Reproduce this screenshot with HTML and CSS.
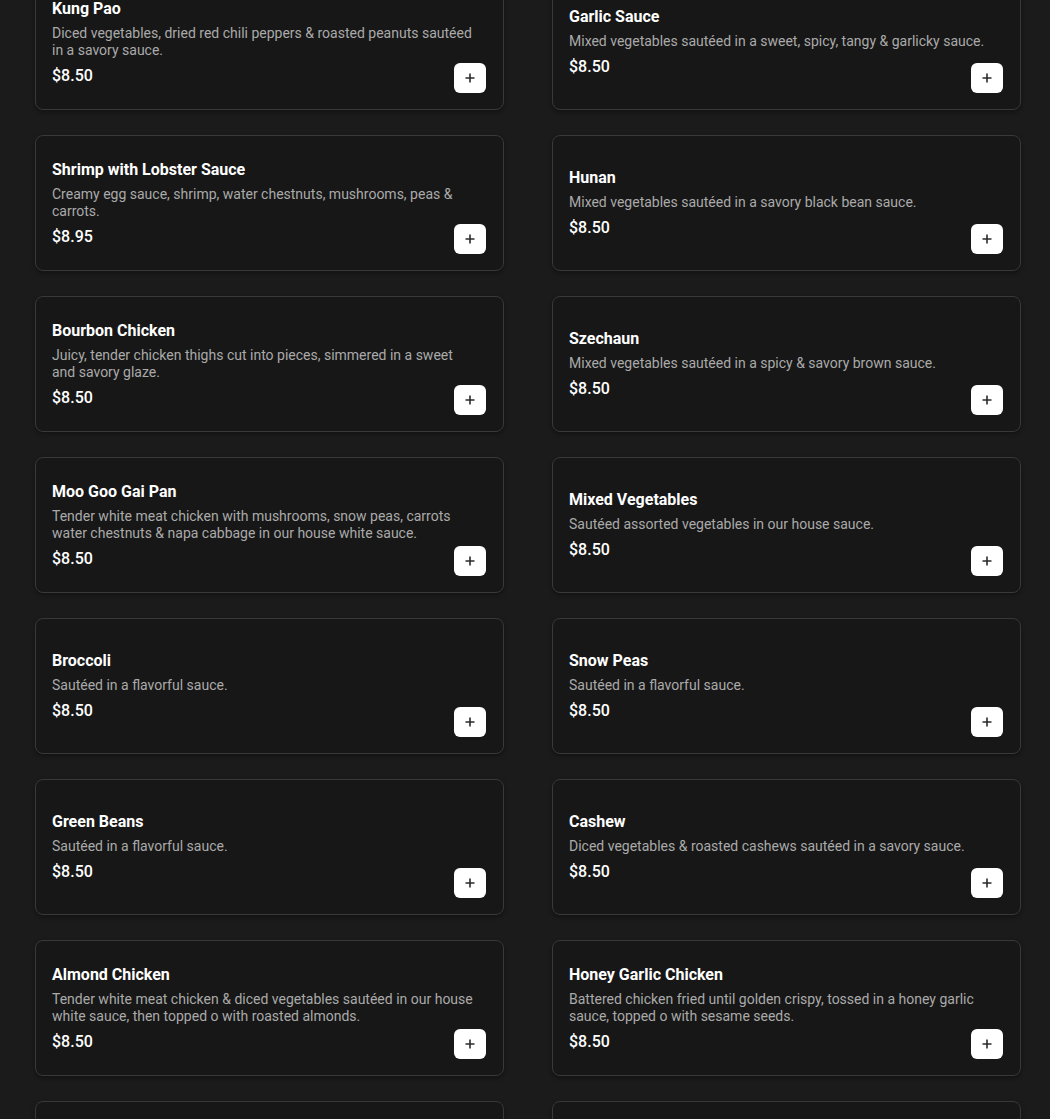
FILE: index.html
```html
<!DOCTYPE html>
<html lang="en">
<head>
    <meta charset="UTF-8">
    <meta name="viewport" content="width=device-width, initial-scale=1.0">
    <title>Menu</title>
    <link rel="stylesheet" href="styles.css">
</head>
<body>
    <div class="menu">
        <div class="menu-grid">
            <div class="menu-item">
                <div class="item-info">
                    <h3>Kung Pao</h3>
                    <p class="item-desc">Diced vegetables, dried red chili peppers &amp; roasted peanuts sautéed in a savory sauce.</p>
                    <div class="item-price">$8.50</div>
                </div>
                <button class="add-button" aria-label="Add"><svg viewBox="0 0 12 12"><path d="M6 1.5v9M1.5 6h9"/></svg></button>
            </div>
            <div class="menu-item">
                <div class="item-info">
                    <h3>Garlic Sauce</h3>
                    <p class="item-desc">Mixed vegetables sautéed in a sweet, spicy, tangy &amp; garlicky sauce.</p>
                    <div class="item-price">$8.50</div>
                </div>
                <button class="add-button" aria-label="Add"><svg viewBox="0 0 12 12"><path d="M6 1.5v9M1.5 6h9"/></svg></button>
            </div>

            <div class="menu-item">
                <div class="item-info">
                    <h3>Shrimp with Lobster Sauce</h3>
                    <p class="item-desc">Creamy egg sauce, shrimp, water chestnuts, mushrooms, peas &amp; carrots.</p>
                    <div class="item-price">$8.95</div>
                </div>
                <button class="add-button" aria-label="Add"><svg viewBox="0 0 12 12"><path d="M6 1.5v9M1.5 6h9"/></svg></button>
            </div>
            <div class="menu-item">
                <div class="item-info">
                    <h3>Hunan</h3>
                    <p class="item-desc">Mixed vegetables sautéed in a savory black bean sauce.</p>
                    <div class="item-price">$8.50</div>
                </div>
                <button class="add-button" aria-label="Add"><svg viewBox="0 0 12 12"><path d="M6 1.5v9M1.5 6h9"/></svg></button>
            </div>

            <div class="menu-item">
                <div class="item-info">
                    <h3>Bourbon Chicken</h3>
                    <p class="item-desc">Juicy, tender chicken thighs cut into pieces, simmered in a sweet and savory glaze.</p>
                    <div class="item-price">$8.50</div>
                </div>
                <button class="add-button" aria-label="Add"><svg viewBox="0 0 12 12"><path d="M6 1.5v9M1.5 6h9"/></svg></button>
            </div>
            <div class="menu-item">
                <div class="item-info">
                    <h3>Szechaun</h3>
                    <p class="item-desc">Mixed vegetables sautéed in a spicy &amp; savory brown sauce.</p>
                    <div class="item-price">$8.50</div>
                </div>
                <button class="add-button" aria-label="Add"><svg viewBox="0 0 12 12"><path d="M6 1.5v9M1.5 6h9"/></svg></button>
            </div>

            <div class="menu-item">
                <div class="item-info">
                    <h3>Moo Goo Gai Pan</h3>
                    <p class="item-desc">Tender white meat chicken with mushrooms, snow peas, carrots water chestnuts &amp; napa cabbage in our house white sauce.</p>
                    <div class="item-price">$8.50</div>
                </div>
                <button class="add-button" aria-label="Add"><svg viewBox="0 0 12 12"><path d="M6 1.5v9M1.5 6h9"/></svg></button>
            </div>
            <div class="menu-item">
                <div class="item-info">
                    <h3>Mixed Vegetables</h3>
                    <p class="item-desc">Sautéed assorted vegetables in our house sauce.</p>
                    <div class="item-price">$8.50</div>
                </div>
                <button class="add-button" aria-label="Add"><svg viewBox="0 0 12 12"><path d="M6 1.5v9M1.5 6h9"/></svg></button>
            </div>

            <div class="menu-item">
                <div class="item-info">
                    <h3>Broccoli</h3>
                    <p class="item-desc">Sautéed in a flavorful sauce.</p>
                    <div class="item-price">$8.50</div>
                </div>
                <button class="add-button" aria-label="Add"><svg viewBox="0 0 12 12"><path d="M6 1.5v9M1.5 6h9"/></svg></button>
            </div>
            <div class="menu-item">
                <div class="item-info">
                    <h3>Snow Peas</h3>
                    <p class="item-desc">Sautéed in a flavorful sauce.</p>
                    <div class="item-price">$8.50</div>
                </div>
                <button class="add-button" aria-label="Add"><svg viewBox="0 0 12 12"><path d="M6 1.5v9M1.5 6h9"/></svg></button>
            </div>

            <div class="menu-item">
                <div class="item-info">
                    <h3>Green Beans</h3>
                    <p class="item-desc">Sautéed in a flavorful sauce.</p>
                    <div class="item-price">$8.50</div>
                </div>
                <button class="add-button" aria-label="Add"><svg viewBox="0 0 12 12"><path d="M6 1.5v9M1.5 6h9"/></svg></button>
            </div>
            <div class="menu-item">
                <div class="item-info">
                    <h3>Cashew</h3>
                    <p class="item-desc">Diced vegetables &amp; roasted cashews sautéed in a savory sauce.</p>
                    <div class="item-price">$8.50</div>
                </div>
                <button class="add-button" aria-label="Add"><svg viewBox="0 0 12 12"><path d="M6 1.5v9M1.5 6h9"/></svg></button>
            </div>

            <div class="menu-item">
                <div class="item-info">
                    <h3>Almond Chicken</h3>
                    <p class="item-desc">Tender white meat chicken &amp; diced vegetables sautéed in our house white sauce, then topped o with roasted almonds.</p>
                    <div class="item-price">$8.50</div>
                </div>
                <button class="add-button" aria-label="Add"><svg viewBox="0 0 12 12"><path d="M6 1.5v9M1.5 6h9"/></svg></button>
            </div>
            <div class="menu-item">
                <div class="item-info">
                    <h3>Honey Garlic Chicken</h3>
                    <p class="item-desc">Battered chicken fried until golden crispy, tossed in a honey garlic sauce, topped o with sesame seeds.</p>
                    <div class="item-price">$8.50</div>
                </div>
                <button class="add-button" aria-label="Add"><svg viewBox="0 0 12 12"><path d="M6 1.5v9M1.5 6h9"/></svg></button>
            </div>

            <!-- next row, only its top edge is in view -->
            <div class="menu-item">
                <button class="add-button" aria-label="Add"><svg viewBox="0 0 12 12"><path d="M6 1.5v9M1.5 6h9"/></svg></button>
            </div>
            <div class="menu-item">
                <button class="add-button" aria-label="Add"><svg viewBox="0 0 12 12"><path d="M6 1.5v9M1.5 6h9"/></svg></button>
            </div>
        </div>
    </div>
</body>
</html>
```

FILE: styles.css
```css
:root {
    --page-bg: #1b1b1b;
    --card-bg: #171717;
    --card-border: #393939;
    --text-main: #ffffff;
    --text-muted: #aaaaaa;
    --icon-dark: #2b2b2b;
}

* {
    margin: 0;
    padding: 0;
    box-sizing: border-box;
}

body {
    font-family: Roboto, 'Liberation Sans', sans-serif;
    color: var(--text-main);
    background-color: var(--page-bg);
    min-height: 100vh;
    overflow: hidden;
}

/* page is shown scrolled a little, so the first row is cut off */
.menu {
    padding: 0 29px 0 35px;
    margin-top: -26px;
}

.menu-grid {
    display: grid;
    grid-template-columns: 469px 469px;
    column-gap: 48px;
    row-gap: 25px;
}

.menu-item {
    display: grid;
    grid-template-areas: "stack";
    height: 136px;
    padding: 16px;
    background-color: var(--card-bg);
    border: 1px solid var(--card-border);
    border-radius: 8px;
    box-shadow: 0 2px 4px rgba(0, 0, 0, 0.35);
}

.item-info {
    grid-area: stack;
    align-self: center;
    padding-right: 8px;
}

.item-info h3 {
    font-size: 16px;
    font-weight: 700;
    line-height: 24px;
    margin-bottom: 4px;
}

.item-desc {
    font-size: 14px;
    line-height: 17px;
    color: var(--text-muted);
}

.item-price {
    font-size: 16px;
    font-weight: 500;
    line-height: 24px;
    margin-top: 5px;
}

.add-button {
    grid-area: stack;
    align-self: end;
    justify-self: end;
    display: flex;
    align-items: center;
    justify-content: center;
    width: 32px;
    height: 30px;
    margin-right: 1px;
    border: none;
    border-radius: 6px;
    background-color: #ffffff;
    cursor: pointer;
}

.add-button svg {
    width: 12px;
    height: 12px;
    fill: none;
    stroke: var(--icon-dark);
    stroke-width: 1.6;
}
```
